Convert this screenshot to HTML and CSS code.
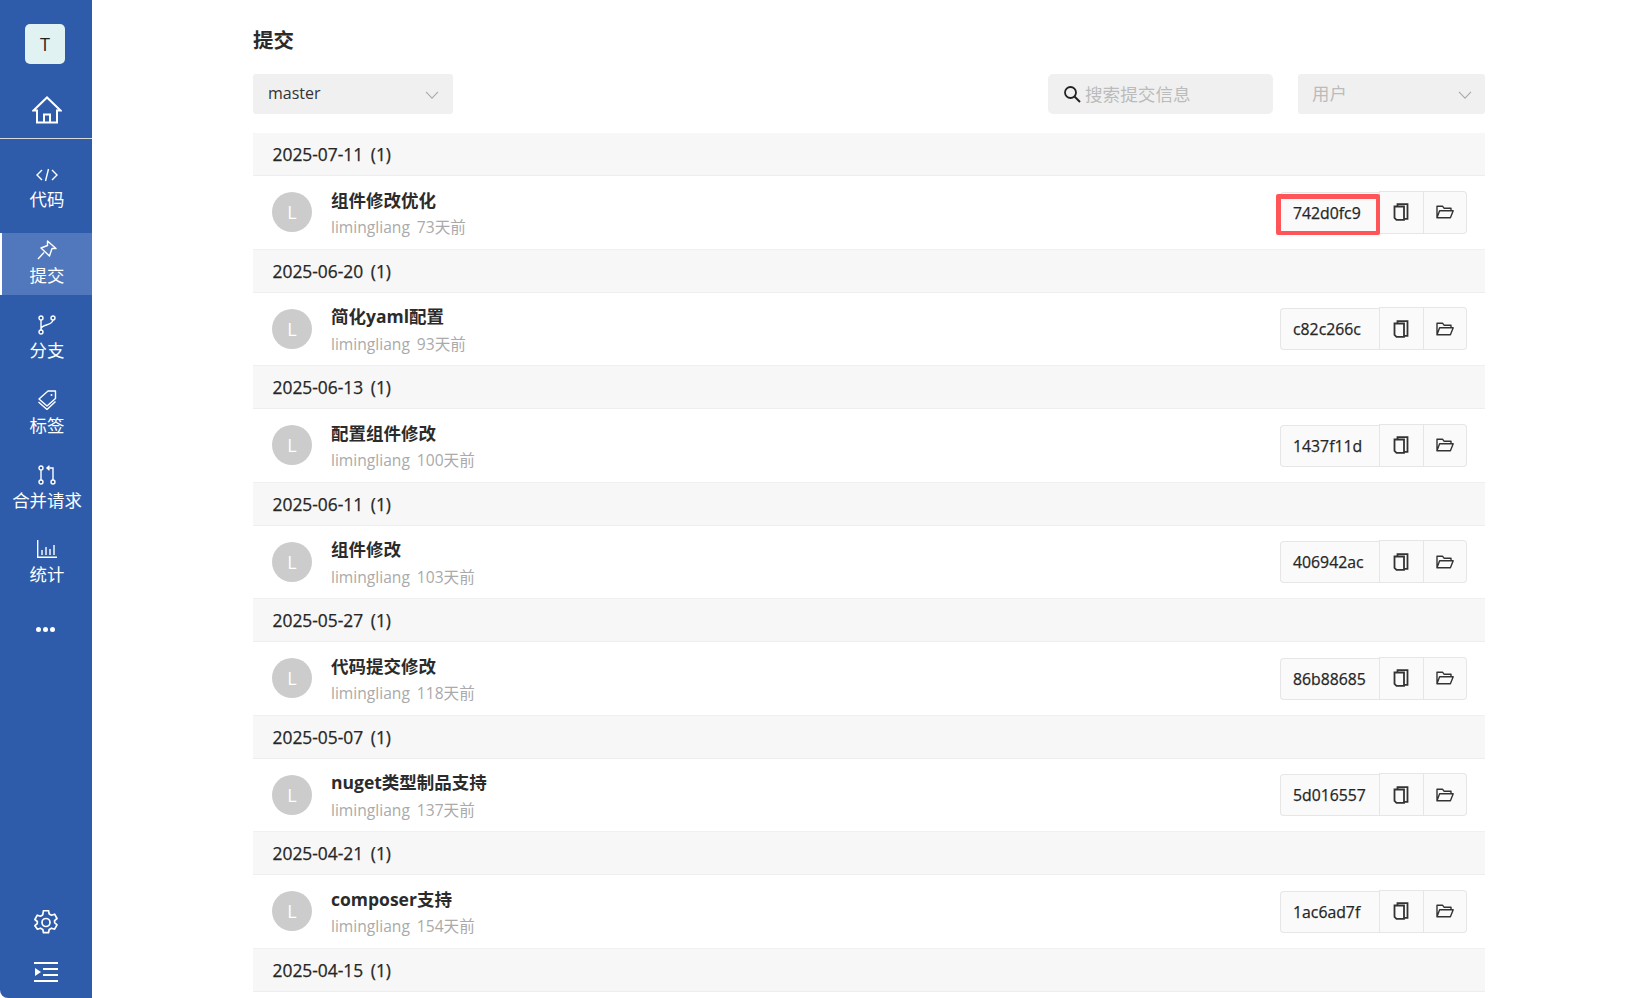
FILE: index.html
```html
<!DOCTYPE html>
<html lang="zh">
<head>
<meta charset="utf-8">
<title>提交</title>
<link rel="stylesheet" href="styles.css">
</head>
<body>
<svg class="defs" width="0" height="0" aria-hidden="true">
  <symbol id="i-copy" viewBox="0 0 16 18"><path d="M4.5 3.5V1.2h10v14.6h-3M1.5 3.5h9.5v13.3H3.5l-2-2z" fill="none" stroke="currentColor" stroke-width="1.8"/></symbol>
  <symbol id="i-folder" viewBox="0 0 18 14"><path d="M1 12.8V1.2h5.5l1.5 2h7v2.6M1 12.8h13.4l2.8-7H3.6z" fill="none" stroke="currentColor" stroke-width="1.4" stroke-linejoin="round"/></symbol>
  <symbol id="i-chev" viewBox="0 0 14 8"><path d="M1 .8l6 6.4 6-6.4" fill="none" stroke="currentColor" stroke-width="1.1"/></symbol>
</svg>
<div class="app">
  <nav class="side">
    <div class="avatar-t">T</div>
    <a class="home"><svg width="30" height="28" viewBox="0 0 30 28"><path d="M1.5 14.5L15 1.5l13.5 13h-3.5v12H5v-12zM12 26.500v-8h6v8" fill="none" stroke="#fff" stroke-width="2"/></svg></a>
    <div class="rule"></div>
    <ul class="nav">
      <li class="nav-item"><svg width="22" height="14" viewBox="0 0 22 14"><path d="M6 2L1 7l5 5M16 2l5 5-5 5M12.500 1L9.500 13" fill="none" stroke="#fff" stroke-width="1.400"/></svg><span>代码</span></li>
      <li class="nav-item active"><svg width="20" height="20" viewBox="0 0 20 20"><path d="M10.500 1L19 8.500h-4L12.500 16 4 8l6.500-2.500zM7 12.500L1 19" fill="none" stroke="#fff" stroke-width="1.400" stroke-linejoin="round"/></svg><span>提交</span></li>
      <li class="nav-item"><svg width="18" height="20" viewBox="0 0 18 20"><g fill="none" stroke="#fff" stroke-width="1.400"><circle cx="3" cy="3" r="2"/><circle cx="3" cy="17" r="2"/><circle cx="15" cy="3" r="2"/><path d="M3 5v10M3 14c0-5 11-3 12-9"/></g></svg><span>分支</span></li>
      <li class="nav-item"><svg width="20" height="20" viewBox="0 0 20 20"><g fill="none" stroke="#fff" stroke-width="1.400" stroke-linejoin="round"><path d="M11 1h7.500v7.500L10 16 2 9z"/><path d="M1.500 12l8.500 7.500 8.500-8"/></g><circle cx="14.500" cy="5" r="1" fill="#fff"/></svg><span>标签</span></li>
      <li class="nav-item"><svg width="18" height="20" viewBox="0 0 18 20"><g fill="none" stroke="#fff" stroke-width="1.400"><circle cx="3" cy="3" r="2"/><circle cx="3" cy="17" r="2"/><circle cx="15" cy="17" r="2"/><path d="M3 5v10M15 15V3H9M11.500 .8L9 3l2.500 2.200"/></g></svg><span>合并请求</span></li>
      <li class="nav-item"><svg width="20" height="18" viewBox="0 0 20 18"><path d="M.7 0v17.300H20M5 15V10M9 15V7M13 15V9M17 15V5" fill="none" stroke="#fff" stroke-width="1.400"/></svg><span>统计</span></li>
    </ul>
    <div class="more"><i></i><i></i><i></i></div>
    <div class="side-foot">
      <svg width="24" height="25" viewBox="0 0 24 25"><g fill="none" stroke="#fff" stroke-width="1.700" stroke-linejoin="round"><path d="M9.500 1.500h5l.7 3.200 2.300 1.300 3.100-1 2.400 4.300-2.400 2.200v2l2.400 2.200-2.400 4.300-3.100-1-2.300 1.300-.7 3.200h-5l-.7-3.200-2.300-1.300-3.100 1L.9 16.500l2.400-2.200v-2L.9 10.300l2.400-4.300 3.100 1 2.300-1.300z" transform="translate(0 -.8)"/><circle cx="12" cy="12.500" r="4"/></g></svg>
      <svg width="24" height="20" viewBox="0 0 24 20"><path d="M0 1h24M9 7h15M9 13h15M0 19h24" fill="none" stroke="#fff" stroke-width="2"/><path d="M1 6l6 4-6 4z" fill="#fff"/></svg>
    </div>
  </nav>
  <main class="main">
    <h1 class="title">提交</h1>
    <div class="filters">
      <div class="select select-branch"><span>master</span><svg class="chev" width="14" height="8"><use href="#i-chev"/></svg></div>
      <div class="search"><svg width="18" height="18" viewBox="0 0 18 18"><circle cx="7.500" cy="7.500" r="5.500" fill="none" stroke="#222" stroke-width="1.800"/><path d="M11.500 11.500L17 17" stroke="#222" stroke-width="2"/></svg><span>搜索提交信息</span></div>
      <div class="select select-user"><span>用户</span><svg class="chev" width="14" height="8"><use href="#i-chev"/></svg></div>
    </div>
    <div class="list">
      <div class="date">2025-07-11 (1)</div>
      <div class="row"><div class="ava">L</div><div class="info"><div class="msg">组件修改优化</div><div class="meta"><span>limingliang</span><span>73天前</span></div></div><div class="btns"><div class="hash marked">742d0fc9</div><div class="ib"><svg width="16" height="18"><use href="#i-copy"/></svg></div><div class="ib"><svg width="18" height="14"><use href="#i-folder"/></svg></div></div></div>
      <div class="date">2025-06-20 (1)</div>
      <div class="row"><div class="ava">L</div><div class="info"><div class="msg">简化yaml配置</div><div class="meta"><span>limingliang</span><span>93天前</span></div></div><div class="btns"><div class="hash">c82c266c</div><div class="ib"><svg width="16" height="18"><use href="#i-copy"/></svg></div><div class="ib"><svg width="18" height="14"><use href="#i-folder"/></svg></div></div></div>
      <div class="date">2025-06-13 (1)</div>
      <div class="row"><div class="ava">L</div><div class="info"><div class="msg">配置组件修改</div><div class="meta"><span>limingliang</span><span>100天前</span></div></div><div class="btns"><div class="hash">1437f11d</div><div class="ib"><svg width="16" height="18"><use href="#i-copy"/></svg></div><div class="ib"><svg width="18" height="14"><use href="#i-folder"/></svg></div></div></div>
      <div class="date">2025-06-11 (1)</div>
      <div class="row"><div class="ava">L</div><div class="info"><div class="msg">组件修改</div><div class="meta"><span>limingliang</span><span>103天前</span></div></div><div class="btns"><div class="hash">406942ac</div><div class="ib"><svg width="16" height="18"><use href="#i-copy"/></svg></div><div class="ib"><svg width="18" height="14"><use href="#i-folder"/></svg></div></div></div>
      <div class="date">2025-05-27 (1)</div>
      <div class="row"><div class="ava">L</div><div class="info"><div class="msg">代码提交修改</div><div class="meta"><span>limingliang</span><span>118天前</span></div></div><div class="btns"><div class="hash">86b88685</div><div class="ib"><svg width="16" height="18"><use href="#i-copy"/></svg></div><div class="ib"><svg width="18" height="14"><use href="#i-folder"/></svg></div></div></div>
      <div class="date">2025-05-07 (1)</div>
      <div class="row"><div class="ava">L</div><div class="info"><div class="msg">nuget类型制品支持</div><div class="meta"><span>limingliang</span><span>137天前</span></div></div><div class="btns"><div class="hash">5d016557</div><div class="ib"><svg width="16" height="18"><use href="#i-copy"/></svg></div><div class="ib"><svg width="18" height="14"><use href="#i-folder"/></svg></div></div></div>
      <div class="date">2025-04-21 (1)</div>
      <div class="row"><div class="ava">L</div><div class="info"><div class="msg">composer支持</div><div class="meta"><span>limingliang</span><span>154天前</span></div></div><div class="btns"><div class="hash">1ac6ad7f</div><div class="ib"><svg width="16" height="18"><use href="#i-copy"/></svg></div><div class="ib"><svg width="18" height="14"><use href="#i-folder"/></svg></div></div></div>
      <div class="date">2025-04-15 (1)</div>
    </div>
  </main>
</div>
</body>
</html>
```
FILE: styles.css
```css
* { box-sizing: border-box; }
html, body { margin: 0; height: 100%; overflow: hidden; background: #fff; }
body { font-family: "Open Sans", "Noto Sans CJK SC", sans-serif; color: #333; }
.defs { position: absolute; }
.app { display: flex; height: 998px; }

.side { width: 92px; flex: none; background: #2e5cab; color: #fff; display: flex; flex-direction: column; border-bottom-left-radius: 8px; }
.avatar-t { width: 40px; height: 40px; margin: 24px 0 0 25px; border-radius: 5px; background: #e0f2f1; color: #222; font-size: 18px; display: flex; align-items: center; justify-content: center; }
.home { display: flex; justify-content: center; margin-top: 32px; height: 28px; padding-left: 2px; }
.rule { height: 1px; background: #d8d8d8; margin-top: 14px; }
.nav { list-style: none; margin: 19px 0 0; padding: 0; display: flex; flex-direction: column; gap: 13px; }
.nav-item { height: 62px; display: flex; flex-direction: column; align-items: center; justify-content: flex-start; gap: 2px; font-size: 17.400px; line-height: 26px; white-space: nowrap; padding-top: 7px; padding-left: 2px; }
.nav-item:first-child { padding-top: 10px; gap: 4px; }
.nav-item:last-child { gap: 3px; }
.nav-item.active { background: #5177bc; border-left: 2px solid #fff; padding-left: 0; }
.more { display: flex; gap: 2px; margin: 32px 0 0 36px; }
.more i { width: 5px; height: 5px; border-radius: 50%; background: #fff; }
.side-foot { margin-top: auto; display: flex; flex-direction: column; align-items: center; gap: 27px; padding-bottom: 16px; }

.main { flex: 1; padding: 26px 155px 0 161px; min-width: 0; }
.title { margin: 0; font-size: 20.500px; line-height: 28px; font-weight: 700; color: #2b2b2b; }
.filters { display: flex; margin-top: 20px; height: 40px; }
.select { background: #f0f0f0; border-radius: 3px; display: flex; align-items: center; justify-content: space-between; padding: 0 14px 2px 15px; }
.select-branch { width: 200px; color: #333; font-size: 16px; }
.select-user { width: 187px; margin-left: 25px; color: #bbb; font-size: 17.400px; padding: 0 13px 3px 14px; }
.chev { color: #aaa; margin-top: 3px; }
.select-user .chev { margin-top: 4px; }
.search { width: 225px; margin-left: auto; background: #f0f0f0; border-radius: 5px; display: flex; align-items: center; gap: 4px; padding: 0 0 1px 15px; color: #bbb; font-size: 17.600px; }
.search svg { margin-top: 1px; }

.list { margin-top: 19px; }
.date { height: 43px; background: #f7f7f7; border-bottom: 1px solid #eee; padding-left: 19.500px; font-size: 17.400px; word-spacing: 3px; line-height: 42px; color: #262626; -webkit-text-stroke: .25px #262626; }
.row { height: 73.500px; display: flex; align-items: center; padding: 0 18px 0 19px; border-bottom: 1px solid #f0f0f0; }
.ava { width: 40px; height: 40px; border-radius: 50%; background: #ccc; color: #fff; font-size: 18px; display: flex; align-items: center; justify-content: center; flex: none; }
.info { margin-left: 19px; flex: 1; min-width: 0; padding-top: 2px; }
.msg { font-size: 17.500px; line-height: 26px; font-weight: 700; color: #2b2b2b; }
.meta { font-size: 15.600px; line-height: 26px; margin-top: 1.500px; color: #aaa; display: flex; gap: 7px; }
.btns { display: flex; align-items: center; }
.hash { position: relative; width: 99px; height: 42px; margin-top: 1px; background: #fafafa; border: 1px solid #e6e6e6; border-right: 0; border-radius: 4px 0 0 4px; display: flex; align-items: center; padding-left: 12px; font-size: 15.800px; color: #262626; -webkit-text-stroke: .25px #262626; }
.hash.marked::after { content: ""; position: absolute; left: -5px; right: -1px; top: 1px; bottom: -2px; border-style: solid; border-color: #ff5558; border-width: 5px 4px 4px 5px; border-radius: 2px; }
.ib { width: 44.500px; height: 43px; background: #fafafa; border: 1px solid #e6e6e6; display: flex; align-items: center; justify-content: center; color: #333; }
.ib + .ib { width: 43.500px; border-left: 0; border-radius: 0 4px 4px 0; }
```
